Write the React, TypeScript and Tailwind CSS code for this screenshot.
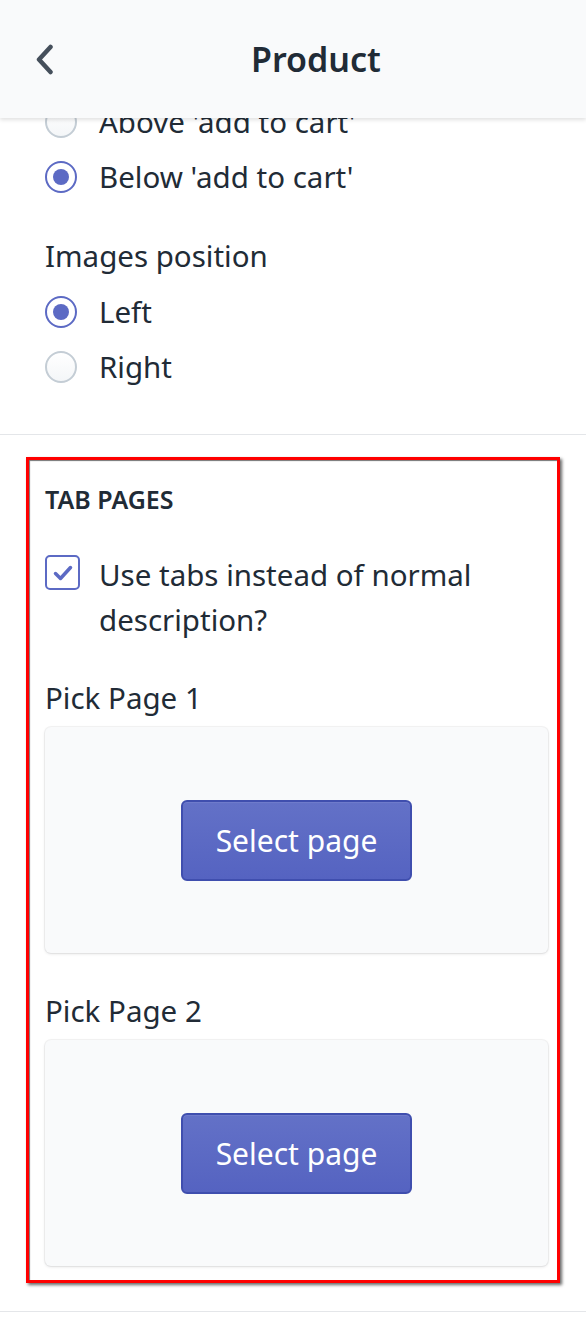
import React from "react";

const ink = "text-[#212b36]";

function Radio({ checked, label }: { checked?: boolean; label: string }) {
  return (
    <div className="flex h-[55px] items-center">
      <span
        className={
          checked
            ? "flex h-[32px] w-[32px] items-center justify-center rounded-full border-2 border-[#5c6ac4] bg-white"
            : "h-[32px] w-[32px] rounded-full border-2 border-[#c4cdd5] bg-gradient-to-b from-white to-[#f4f6f8]"
        }
      >
        {checked && <span className="h-[16px] w-[16px] rounded-full bg-[#5c6ac4]" />}
      </span>
      <span className={`ml-[22px] text-[29.5px] leading-[40px] ${ink}`}>{label}</span>
    </div>
  );
}

function PagePicker({ label }: { label: string }) {
  return (
    <div>
      <div className={`text-[29.5px] leading-[40px] ${ink}`}>{label}</div>
      <div className="mt-[9px] flex h-[226px] items-center justify-center rounded-[6px] bg-[#f9fafb] shadow-[0_0_0_1px_rgba(63,63,68,0.05),0_1px_3px_0_rgba(63,63,68,0.15)]">
        <button className="h-[81px] w-[231px] rounded-[6px] border-2 border-[#3f4eae] bg-gradient-to-b from-[#6371c7] to-[#5563c1] text-[30px] text-white shadow-[inset_0_1px_0_0_#6f7bcb]">
          Select page
        </button>
      </div>
    </div>
  );
}

export default function App() {
  return (
    <div
      className="relative h-[1337px] w-[586px] overflow-hidden bg-white"
      style={{ fontFamily: '"Noto Sans", "Open Sans", sans-serif' }}
    >
      {/* top bar sits over the scrolled list */}
      <div className="absolute inset-x-0 top-0 z-10 flex h-[118px] items-center bg-[#f9fafb] shadow-[0_2px_4px_rgba(0,0,0,0.12)]">
        <svg className="ml-[34px] h-[31px] w-[21px]" viewBox="0 0 21 31" fill="none">
          <path d="M16.5 3 L5 15.5 L16.5 28" stroke="#454f5b" strokeWidth="4.5" strokeLinecap="round" strokeLinejoin="round" />
        </svg>
        <div className={`ml-[196px] text-[34px] font-semibold ${ink}`}>Product</div>
      </div>

      <div className="border-b border-[#e4e6e9] pb-[40px] pl-[45px] pt-[94px]">
        <Radio label="Above 'add to cart'" />
        <Radio checked label="Below 'add to cart'" />
        <div className={`mt-[32px] mb-[8px] text-[29.5px] leading-[40px] ${ink}`}>Images position</div>
        <Radio checked label="Left" />
        <Radio label="Right" />
      </div>

      <div className="ml-[26px] mt-[22px] w-[534px] border-[3px] border-[#ff0000] pb-[14px] pl-[16px] pr-[9px] pt-[24px] shadow-[2px_2px_3px_rgba(0,0,0,0.6),inset_1px_1px_1px_rgba(0,0,0,0.55)]">
        <div className={`text-[25px] font-semibold uppercase leading-[30px] ${ink}`}>Tab pages</div>
        <div className="mt-[38px] flex items-start">
          <span className="mt-[3px] flex h-[35px] w-[35px] shrink-0 items-center justify-center rounded-[5px] border-2 border-[#5c6ac4] bg-white">
            <svg className="h-[22px] w-[22px]" viewBox="0 0 22 22" fill="none">
              <path d="M3.5 11.5 L8.5 16.5 L18.5 5.5" stroke="#5c6ac4" strokeWidth="3.5" strokeLinecap="round" strokeLinejoin="round" />
            </svg>
          </span>
          <span className={`ml-[19px] text-[29.5px] leading-[45px] ${ink}`}>
            Use tabs instead of normal description?
          </span>
        </div>
        <div className="mt-[36px]">
          <PagePicker label="Pick Page 1" />
        </div>
        <div className="mt-[38px]">
          <PagePicker label="Pick Page 2" />
        </div>
      </div>

      <div className="mt-[28px] border-t border-[#e4e6e9]" />
    </div>
  );
}
